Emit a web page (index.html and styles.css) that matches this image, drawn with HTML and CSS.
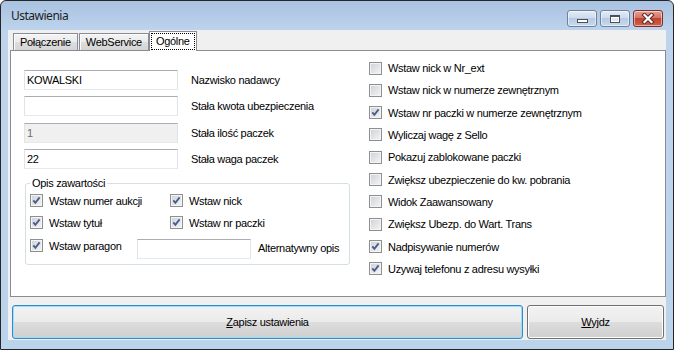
FILE: index.html
```html
<!DOCTYPE html>
<html lang="pl">
<head>
    <meta charset="UTF-8">
    <title>Ustawienia</title>
    <link rel="stylesheet" href="styles.css">
</head>
<body>
    <div class="window">
        <div class="titlebar">
            <span class="title">Ustawienia</span>
            <div class="caption-buttons">
                <span class="cap cap-min"><span class="min-glyph"></span></span>
                <span class="cap cap-max"><span class="max-glyph"></span></span>
                <span class="cap cap-close">
                    <svg width="14" height="11" viewBox="0 0 14 11">
                        <path d="M3.5 2 L10.5 9 M10.5 2 L3.5 9" stroke="#5b2a2a" stroke-width="4.2" stroke-linecap="square"/>
                        <path d="M3.5 2 L10.5 9 M10.5 2 L3.5 9" stroke="#fff" stroke-width="2.2" stroke-linecap="square"/>
                    </svg>
                </span>
            </div>
        </div>
        <div class="client">
            <div class="tabs">
                <div class="tab">Połączenie</div>
                <div class="tab">WebService</div>
                <div class="tab tab-active"><span class="focus">Ogólne</span></div>
            </div>
            <div class="panel">
                <div class="col-left">
                    <div class="fields">
                        <div class="field"><input class="textbox" value="KOWALSKI"><label>Nazwisko nadawcy</label></div>
                        <div class="field"><input class="textbox" value=""><label>Stała kwota ubezpieczenia</label></div>
                        <div class="field"><input class="textbox" value="1" disabled><label>Stała ilość paczek</label></div>
                        <div class="field"><input class="textbox" value="22"><label>Stała waga paczek</label></div>
                    </div>
                    <fieldset class="group">
                        <legend>Opis zawartości</legend>
                        <div class="group-row">
                            <div class="check wide"><span class="cb"><svg width="11" height="11" viewBox="0 0 11 11"><polyline points="2.3,5.3 4.4,7.8 8.6,2.4" fill="none" stroke="#4b5d8c" stroke-width="1.9"/></svg></span>Wstaw numer aukcji</div>
                            <div class="check"><span class="cb"><svg width="11" height="11" viewBox="0 0 11 11"><polyline points="2.3,5.3 4.4,7.8 8.6,2.4" fill="none" stroke="#4b5d8c" stroke-width="1.9"/></svg></span>Wstaw nick</div>
                        </div>
                        <div class="group-row">
                            <div class="check wide"><span class="cb"><svg width="11" height="11" viewBox="0 0 11 11"><polyline points="2.3,5.3 4.4,7.8 8.6,2.4" fill="none" stroke="#4b5d8c" stroke-width="1.9"/></svg></span>Wstaw tytuł</div>
                            <div class="check"><span class="cb"><svg width="11" height="11" viewBox="0 0 11 11"><polyline points="2.3,5.3 4.4,7.8 8.6,2.4" fill="none" stroke="#4b5d8c" stroke-width="1.9"/></svg></span>Wstaw nr paczki</div>
                        </div>
                        <div class="group-row paragon-row">
                            <div class="check narrow"><span class="cb"><svg width="11" height="11" viewBox="0 0 11 11"><polyline points="2.3,5.3 4.4,7.8 8.6,2.4" fill="none" stroke="#4b5d8c" stroke-width="1.9"/></svg></span>Wstaw paragon</div>
                            <input class="textbox alt-box" value="">
                            <label class="alt-label">Alternatywny opis</label>
                        </div>
                    </fieldset>
                </div>
                <div class="col-right">
                    <div class="check"><span class="cb"></span>Wstaw nick w Nr_ext</div>
                    <div class="check"><span class="cb"></span>Wstaw nick w numerze zewnętrznym</div>
                    <div class="check"><span class="cb"><svg width="11" height="11" viewBox="0 0 11 11"><polyline points="2.3,5.3 4.4,7.8 8.6,2.4" fill="none" stroke="#4b5d8c" stroke-width="1.9"/></svg></span>Wstaw nr paczki w numerze zewnętrznym</div>
                    <div class="check"><span class="cb"></span>Wyliczaj wagę z Sello</div>
                    <div class="check"><span class="cb"></span>Pokazuj zablokowane paczki</div>
                    <div class="check"><span class="cb"></span>Zwiększ ubezpieczenie do kw. pobrania</div>
                    <div class="check"><span class="cb"></span>Widok Zaawansowany</div>
                    <div class="check"><span class="cb"></span>Zwiększ Ubezp. do Wart. Trans</div>
                    <div class="check"><span class="cb"><svg width="11" height="11" viewBox="0 0 11 11"><polyline points="2.3,5.3 4.4,7.8 8.6,2.4" fill="none" stroke="#4b5d8c" stroke-width="1.9"/></svg></span>Nadpisywanie numerów</div>
                    <div class="check"><span class="cb"><svg width="11" height="11" viewBox="0 0 11 11"><polyline points="2.3,5.3 4.4,7.8 8.6,2.4" fill="none" stroke="#4b5d8c" stroke-width="1.9"/></svg></span>Uzywaj telefonu z adresu wysyłki</div>
                </div>
            </div>
            <div class="actions">
                <button class="btn btn-default"><u>Z</u>apisz ustawienia</button>
                <button class="btn btn-exit"><u>W</u>yjdz</button>
            </div>
        </div>
    </div>
</body>
</html>
```

FILE: styles.css
```css
* {
    box-sizing: border-box;
}
body {
    margin: 0;
    font-family: "Liberation Sans", Arial, sans-serif;
    font-size: 11px;
    letter-spacing: -0.3px;
    color: #000;
}
.window {
    width: 674px;
    height: 350px;
    border: 1px solid #262626;
    border-radius: 6px 6px 0 0;
    background: linear-gradient(to bottom, #a8c2e1 0, #bed4ed 30px, #bcd3ec 100%);
    display: flex;
    flex-direction: column;
    overflow: hidden;
}
.titlebar {
    height: 29px;
    display: flex;
    align-items: center;
    padding: 0 10px 0 10px;
}
.title {
    flex: 1;
    font-family: "Noto Sans", sans-serif;
    font-size: 12px;
    letter-spacing: -0.5px;
    color: #1e1e1e;
}
.caption-buttons {
    display: flex;
    gap: 3px;
    align-self: flex-start;
    margin-top: 9px;
}
.cap {
    width: 30px;
    height: 17px;
    border: 1px solid #6f819b;
    border-radius: 3px;
    display: flex;
    align-items: center;
    justify-content: center;
    background: linear-gradient(#e3ebf5, #cfdcee 45%, #b6cae3 50%, #c9daef);
    box-shadow: inset 0 0 0 1px rgba(255, 255, 255, 0.5);
}
.min-glyph {
    width: 11px;
    height: 4px;
    margin-top: 5px;
    background: #fff;
    border: 1px solid #4a4f58;
}
.max-glyph {
    width: 10px;
    height: 8px;
    border: 1px solid #4a4f58;
    border-top-width: 2px;
    background: #dfe7f1;
    box-shadow: inset 0 0 0 1px #fff;
}
.cap-close {
    border-color: #7c2e2a;
    background: linear-gradient(#e9a293, #d57462 45%, #c0442f 50%, #cf6049);
}
.client {
    margin: 0 7px;
    height: 310px;
    background: #f0f0f0;
    padding: 1px 0 0 2px;
}
.tabs {
    display: flex;
    align-items: flex-end;
    height: 19px;
    padding-left: 3px;
}
.tab {
    height: 17px;
    line-height: 16px;
    padding: 0 6px;
    margin-right: 1px;
    border: 1px solid #898c95;
    border-bottom: 0;
    background: linear-gradient(#f4f4f4, #ebebeb 50%, #dedede 50%, #d4d4d4);
    box-shadow: inset 1px 1px 0 #fcfcfc;
}
.tab-active {
    height: 20px;
    margin: 0 0 -1px -1px;
    padding: 1px 1px 0;
    background: #fff;
    box-shadow: none;
    position: relative;
    z-index: 1;
}
.focus {
    display: block;
    height: 17px;
    line-height: 15px;
    padding: 0 4px;
    border: 1px dotted #000;
}
.panel {
    width: 656px;
    height: 247px;
    border: 1px solid #898c95;
    background: #fff;
    display: flex;
}
.col-left {
    width: 358px;
    padding: 19px 0 0 13px;
}
.fields {
    display: flex;
    flex-direction: column;
    gap: 6.33px;
}
.field {
    display: flex;
    align-items: center;
    height: 20px;
}
.field label {
    margin-left: 13px;
}
.textbox {
    width: 154px;
    height: 20px;
    margin: 0;
    padding: 0 2px;
    border: 1px solid;
    border-color: #abadb3 #e2e3ea #e3e9ef #e2e3ea;
    font: inherit;
    letter-spacing: inherit;
    color: #000;
    background: #fff;
}
.textbox:disabled {
    background: #f0f0f0;
    color: #6d6d6d;
}
.group {
    width: 325px;
    margin: 8px 0 0 1px;
    padding: 3px 0 5px 4px;
    border: 1px solid #d5dfe5;
    border-radius: 3px;
}
.group legend {
    padding: 0 2px;
    line-height: 13px;
}
.group-row {
    display: flex;
    align-items: center;
    height: 16px;
}
.group-row + .group-row {
    margin-top: 6px;
}
.wide {
    width: 140px;
}
.paragon-row {
    height: 21px;
    align-items: flex-start;
}
.group-row.paragon-row {
    margin-top: 7px;
}
.narrow {
    width: 107px;
}
.alt-box {
    width: 114px;
    margin-top: 1px;
}
.alt-label {
    align-self: center;
    margin-left: 7px;
}
.col-right {
    padding-top: 9px;
    display: flex;
    flex-direction: column;
    gap: 6.33px;
}
.check {
    display: flex;
    align-items: center;
    gap: 6px;
    height: 16px;
    white-space: nowrap;
}
.cb {
    flex: none;
    width: 13px;
    height: 13px;
    border: 1px solid #8e8f8f;
    background: linear-gradient(135deg, #cdd1d7, #f5f5f5);
    box-shadow: inset 0 0 0 1px #f4f4f4;
    display: flex;
    align-items: center;
    justify-content: center;
}
.actions {
    display: flex;
    gap: 4px;
    margin-top: 8px;
    padding-left: 2px;
}
.btn {
    height: 34px;
    margin: 0;
    padding: 0;
    border: 1px solid #707070;
    border-radius: 3px;
    background: linear-gradient(#f2f2f2, #ebebeb 50%, #dddddd 50%, #cfcfcf);
    box-shadow: inset 0 0 0 1px #fcfcfc;
    font: inherit;
    letter-spacing: inherit;
    color: #000;
}
.btn-default {
    width: 511px;
    border-color: #2f8ad0;
    box-shadow: inset 0 0 0 1px #9fdcf7;
}
.btn-exit {
    width: 137px;
}
```
